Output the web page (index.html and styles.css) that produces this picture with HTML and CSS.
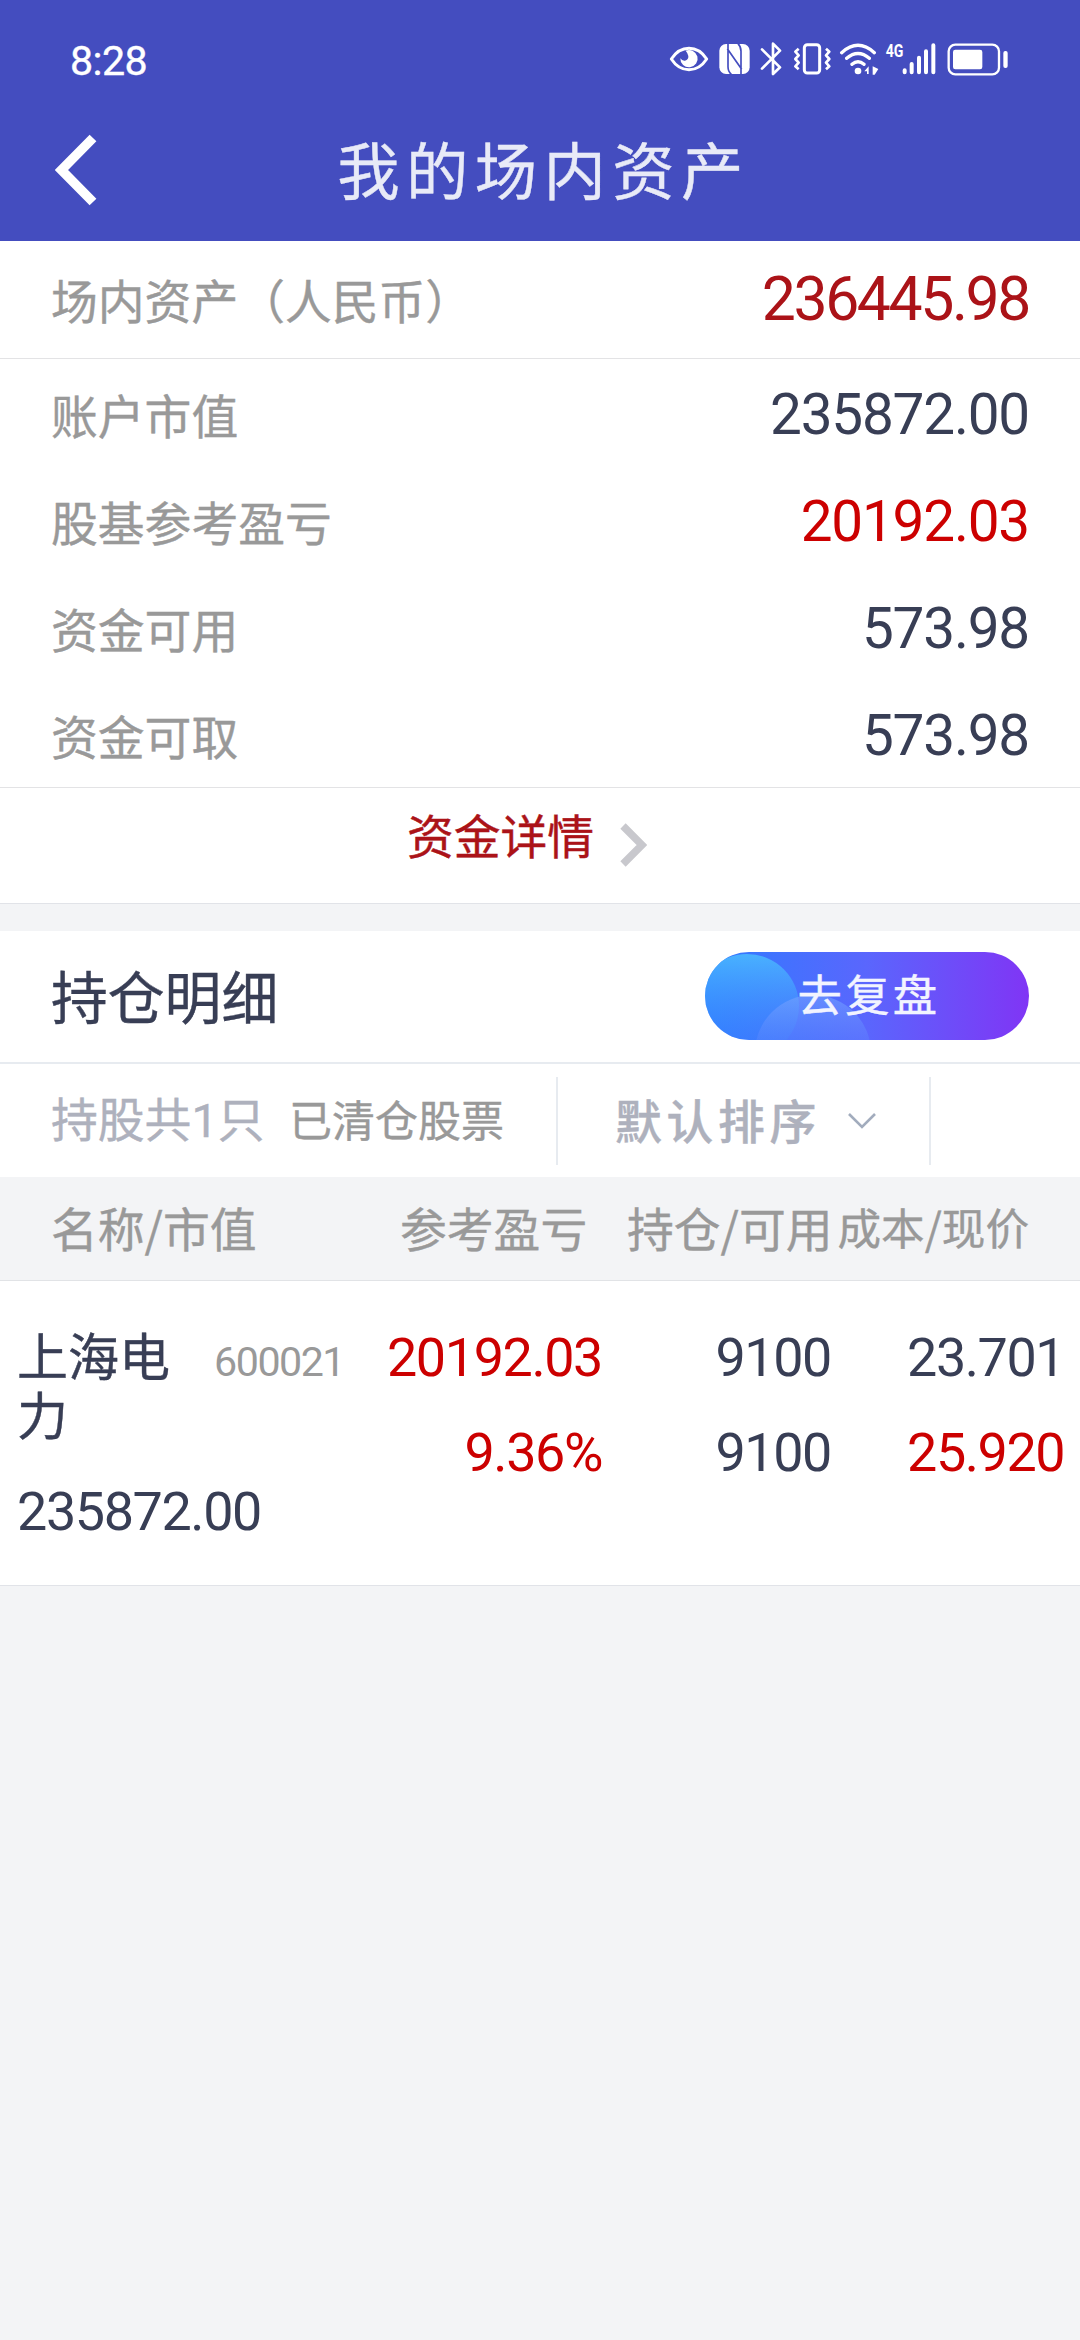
FILE: index.html
```html
<!DOCTYPE html>
<html lang="zh-CN">
<head>
<meta charset="utf-8">
<title>我的场内资产</title>
<link rel="stylesheet" href="styles.css">
</head>
<body>
<header class="header">
  <div class="status">
    <span class="time">8:28</span>
    <div class="status-icons">
      <svg class="gap-10" width="40" height="40" viewBox="57 60 120 120">
        <path d="M64 117C92 74 142 74 170 117C142 160 92 160 64 117Z" fill="none" stroke="#fff" stroke-width="9" stroke-linejoin="round"/>
        <path d="M107 92A26 26 0 1 1 91 115Q96 123 105 122Q116 119 115 108Q114 100 107 92Z" fill="#fff"/>
      </svg>
      <svg class="gap-10" width="31" height="40" viewBox="207 60 93 120">
        <rect x="208" y="72" width="91" height="90" rx="20" fill="#fff"/>
        <path d="M234 70V140Q234 154 244 163M232 86L275 148M273 164V94Q273 80 264 71" fill="none" stroke="#444dbf" stroke-width="5"/>
      </svg>
      <svg class="gap-9" width="23" height="40" viewBox="330 60 69 120">
        <path d="M336 88L390 142L369 162V71L390 92L336 146" fill="none" stroke="#fff" stroke-width="8" stroke-linejoin="round" stroke-linecap="round"/>
      </svg>
      <svg class="gap-7" width="40" height="40" viewBox="426 60 120 120">
        <rect x="463" y="74" width="46" height="85" rx="9" fill="none" stroke="#fff" stroke-width="9"/>
        <path d="M446 86L436 95L446 106L436 117L446 128L436 139L446 148M528 86L538 95L528 106L538 117L528 128L538 139L528 148" fill="none" stroke="#fff" stroke-width="8" stroke-linejoin="round"/>
      </svg>
      <svg class="gap-6" width="40" height="40" viewBox="567 60 120 120">
        <path d="M575 98Q624 54 673 98M590 115Q624 86 658 115M606 133Q624 117 642 133" fill="none" stroke="#fff" stroke-width="10" stroke-linecap="round"/>
        <circle cx="624" cy="153" r="10" fill="#fff"/>
        <path d="M643 154L656 139V162H651V154ZM668 139L685 147L674 164H668Z" fill="#fff"/>
      </svg>
      <svg class="gap-10" width="52" height="40" viewBox="705 60 156 120">
        <text class="network" x="707" y="112" textLength="53" lengthAdjust="spacingAndGlyphs">4G</text>
        <path d="M764 151V157M785 132V157M807 113V157M828 94V157M850 76V157" stroke="#fff" stroke-width="12" stroke-linecap="round"/>
      </svg>
      <svg width="62" height="40" viewBox="891 60 186 120">
        <rect x="896" y="74" width="151" height="89" rx="20" fill="none" stroke="#fff" stroke-width="7"/>
        <rect x="909" y="89" width="88" height="59" rx="7" fill="#fff"/>
        <rect x="1060" y="93" width="13" height="51" rx="6" fill="#fff"/>
      </svg>
    </div>
  </div>
  <nav class="nav">
    <svg class="back" width="44" height="72" viewBox="0 0 44 72"><path d="M38 4L6.500 36L38 68" fill="none" stroke="#fff" stroke-width="9.500"/></svg>
    <h1 class="title">我的场内资产</h1>
  </nav>
</header>

<main>
  <section class="total">
    <span class="label">场内资产（人民币）</span>
    <span class="num num-total">236445.98</span>
  </section>
  <section class="summary">
    <div class="row"><span class="label">账户市值</span><span class="num">235872.00</span></div>
    <div class="row"><span class="label">股基参考盈亏</span><span class="num up">20192.03</span></div>
    <div class="row"><span class="label">资金可用</span><span class="num">573.98</span></div>
    <div class="row"><span class="label">资金可取</span><span class="num">573.98</span></div>
  </section>
  <a class="detail">
    <span>资金详情</span>
    <svg class="detail-arrow" width="27" height="44" viewBox="0 0 27 44"><path d="M3 3L22 22L3 41" fill="none" stroke="#c8c8cd" stroke-width="7.500"/></svg>
  </a>

  <section class="holdings-head">
    <h2 class="holdings-title">持仓明细</h2>
    <a class="review">
      <svg class="review-bg" width="324" height="88" viewBox="0 0 324 88">
        <defs>
          <linearGradient id="pill" x1="0" x2="1" y1="0" y2="0"><stop offset="0" stop-color="#2e7cff"/><stop offset=".5" stop-color="#5a66fd"/><stop offset="1" stop-color="#8035f5"/></linearGradient>
          <linearGradient id="bubble" x1="0" x2="0" y1="0" y2="1"><stop offset="0" stop-color="#4bbcff" stop-opacity=".85"/><stop offset="1" stop-color="#3b82ff" stop-opacity=".15"/></linearGradient>
          <linearGradient id="bubble2" x1="0" x2="0" y1="0" y2=".45"><stop offset="0" stop-color="#78a4ff" stop-opacity=".6"/><stop offset="1" stop-color="#5c86ff" stop-opacity=".3"/></linearGradient>
          <clipPath id="pill-clip"><rect width="324" height="88" rx="44"/></clipPath>
        </defs>
        <g clip-path="url(#pill-clip)">
          <rect width="324" height="88" fill="url(#pill)"/>
          <circle cx="42" cy="54" r="52" fill="url(#bubble)"/>
          <circle cx="108" cy="101" r="58" fill="url(#bubble2)"/>
        </g>
      </svg>
      <span class="review-text">去复盘</span>
    </a>
  </section>

  <section class="filters">
    <div class="filter-tabs">
      <span class="count">持股共<span class="count-num">1</span>只</span>
      <span class="cleared">已清仓股票</span>
    </div>
    <div class="sort">
      <span class="sort-text">默认排序</span>
      <svg width="30" height="18" viewBox="0 0 30 18"><path d="M2 2L15 15L28 2" fill="none" stroke="#a2acbd" stroke-width="2.600"/></svg>
    </div>
  </section>

  <section class="table-head">
    <span class="th-name">名称/市值</span>
    <span class="th-profit">参考盈亏</span>
    <span class="th-hold">持仓/可用</span>
    <span class="th-cost">成本/现价</span>
  </section>

  <section class="stock">
    <div class="stock-id">
      <div class="stock-line"><span class="stock-name">上海电力</span><span class="stock-code">600021</span></div>
      <span class="value">235872.00</span>
    </div>
    <div class="cell cell-profit"><span class="value up">20192.03</span><span class="value up">9.36%</span></div>
    <div class="cell cell-hold"><span class="value">9100</span><span class="value">9100</span></div>
    <div class="cell cell-cost"><span class="value">23.701</span><span class="value up">25.920</span></div>
  </section>
</main>
</body>
</html>
```
FILE: styles.css
```css
* {
  box-sizing: border-box;
}

body {
  margin: 0;
  width: 1080px;
  min-height: 2340px;
  background: #f3f4f6;
  color: #383e55;
  font-family: "Noto Sans CJK SC", sans-serif;
  font-size: 46.8px;
  line-height: 1;
  -webkit-text-stroke: 0.4px currentColor;
}

svg {
  display: block;
  flex: none;
}

/* header */
.header {
  height: 241px;
  background: #444dbf;
  color: #fff;
}

.status {
  display: flex;
  justify-content: space-between;
  height: 120px;
  padding: 40px 71px 0 70px;
}

.time {
  font: 400 41.2px/42px Roboto, sans-serif;
  letter-spacing: -0.6px;
}

.status-icons {
  display: flex;
}

.gap-10 { margin-right: 10px; }
.gap-9 { margin-right: 9px; }
.gap-7 { margin-right: 7px; }
.gap-6 { margin-right: 6px; }

.network {
  font: 700 56px Roboto, sans-serif;
  fill: #fff;
}

.nav {
  display: grid;
  grid-template-columns: 160px 1fr 160px;
  align-items: center;
  height: 100px;
}

.back {
  margin-left: 55px;
}

.title {
  margin: 0;
  padding: 0 0 4px 7px;
  text-align: center;
  font-size: 62.4px;
  font-weight: 400;
  line-height: 92px;
  letter-spacing: 6.4px;
  color: #e8eaf7;
}

/* account summary */
.total,
.row {
  display: flex;
  align-items: center;
  justify-content: space-between;
  padding: 0 51px 0 51px;
}

.total {
  height: 118px;
  background: #fff;
  border-bottom: 1px solid #e3e3e5;
}

.label {
  color: #999;
}

.num {
  font: 400 56.7px/64px Roboto, sans-serif;
  letter-spacing: -1.2px;
  -webkit-text-stroke-width: 0;
}

.num-total {
  font-size: 60.7px;
  letter-spacing: -2.4px;
  color: #ab1318;
}

.up {
  color: #cc0000;
}

.summary {
  height: 429px;
  padding-top: 1px;
  background: #fff;
  border-bottom: 1px solid #e3e3e5;
}

.row {
  height: 107px;
}

.row .num {
  padding-top: 3px;
}

.row .label {
  padding-top: 1px;
}

.detail {
  display: flex;
  justify-content: center;
  height: 116px;
  padding: 22px 26px 0 0;
  background: #fff;
  border-bottom: 1px solid #e1e3e8;
  color: #ab1318;
}

.detail span {
  padding-top: 1px;
}

.detail-arrow {
  margin: 13px 0 0 26px;
}

/* holdings */
.holdings-head {
  display: flex;
  align-items: center;
  justify-content: space-between;
  height: 133px;
  margin-top: 27px;
  padding: 0 51px 1px;
  background: #fff;
  border-bottom: 2px solid #e7ebf0;
}

.holdings-title {
  margin: 0;
  padding-bottom: 4px;
  font-size: 56.8px;
  font-weight: 400;
}

.review {
  display: grid;
  place-items: center;
}

.review-bg,
.review-text {
  grid-area: 1 / 1;
}

.review-text {
  z-index: 1;
  padding: 0 0 5px 4px;
  color: #f2f4ff;
  font-size: 44.4px;
  letter-spacing: 3.2px;
}

.filters {
  display: flex;
  align-items: center;
  height: 113px;
  background: #fff;
}

.filter-tabs {
  display: flex;
  align-items: center;
  width: 556px;
  padding: 0 0 3px 51px;
}

.count {
  width: 238px;
  color: #aeb1bd;
}

.count-num {
  font-family: Roboto, sans-serif;
}

.cleared {
  font-size: 43px;
  color: #999;
}

.sort {
  display: flex;
  align-items: center;
  width: 375px;
  height: 88px;
  padding-left: 57px;
  border-left: 2px solid #e7ebf0;
  border-right: 2px solid #e7ebf0;
  font-weight: 500;
  letter-spacing: 4.7px;
  color: #aeb1bd;
}

.sort-text {
  padding-bottom: 2px;
}

.sort svg {
  margin-left: 26px;
}

.table-head {
  display: grid;
  grid-template-columns: 349px 187px 206px 1fr;
  align-items: center;
  height: 104px;
  padding: 0 51px 3px;
  border-bottom: 1px solid #e1e3e6;
  color: #999;
}

.table-head span {
  white-space: nowrap;
}

.th-hold {
  padding-left: 40px;
}

.th-cost {
  text-align: right;
  font-size: 43.6px;
}

.stock {
  display: grid;
  grid-template-columns: 340px 245px 229px 1fr;
  height: 305px;
  padding: 44px 18px 0 17px;
  background: #fff;
  border-bottom: 1px solid #e1e3e8;
}

.value {
  font: 400 53.9px/64px Roboto, sans-serif;
  letter-spacing: -1.4px;
  -webkit-text-stroke-width: 0;
}

.stock-id,
.cell {
  display: flex;
  flex-direction: column;
}

.stock-id {
  gap: 37px;
}

.stock-line {
  display: flex;
  justify-content: space-between;
}

.stock-name {
  width: 156px;
  font-size: 51px;
  line-height: 59px;
}

.stock-code {
  padding: 13px 13px 0 0;
  font: 400 41.2px/48px Roboto, sans-serif;
  letter-spacing: -1.5px;
  -webkit-text-stroke-width: 0;
  color: #999;
}

.cell {
  align-items: flex-end;
  gap: 31px;
  padding-top: 1px;
}

.cell-cost {
  align-items: flex-start;
  padding-left: 76px;
}
```
